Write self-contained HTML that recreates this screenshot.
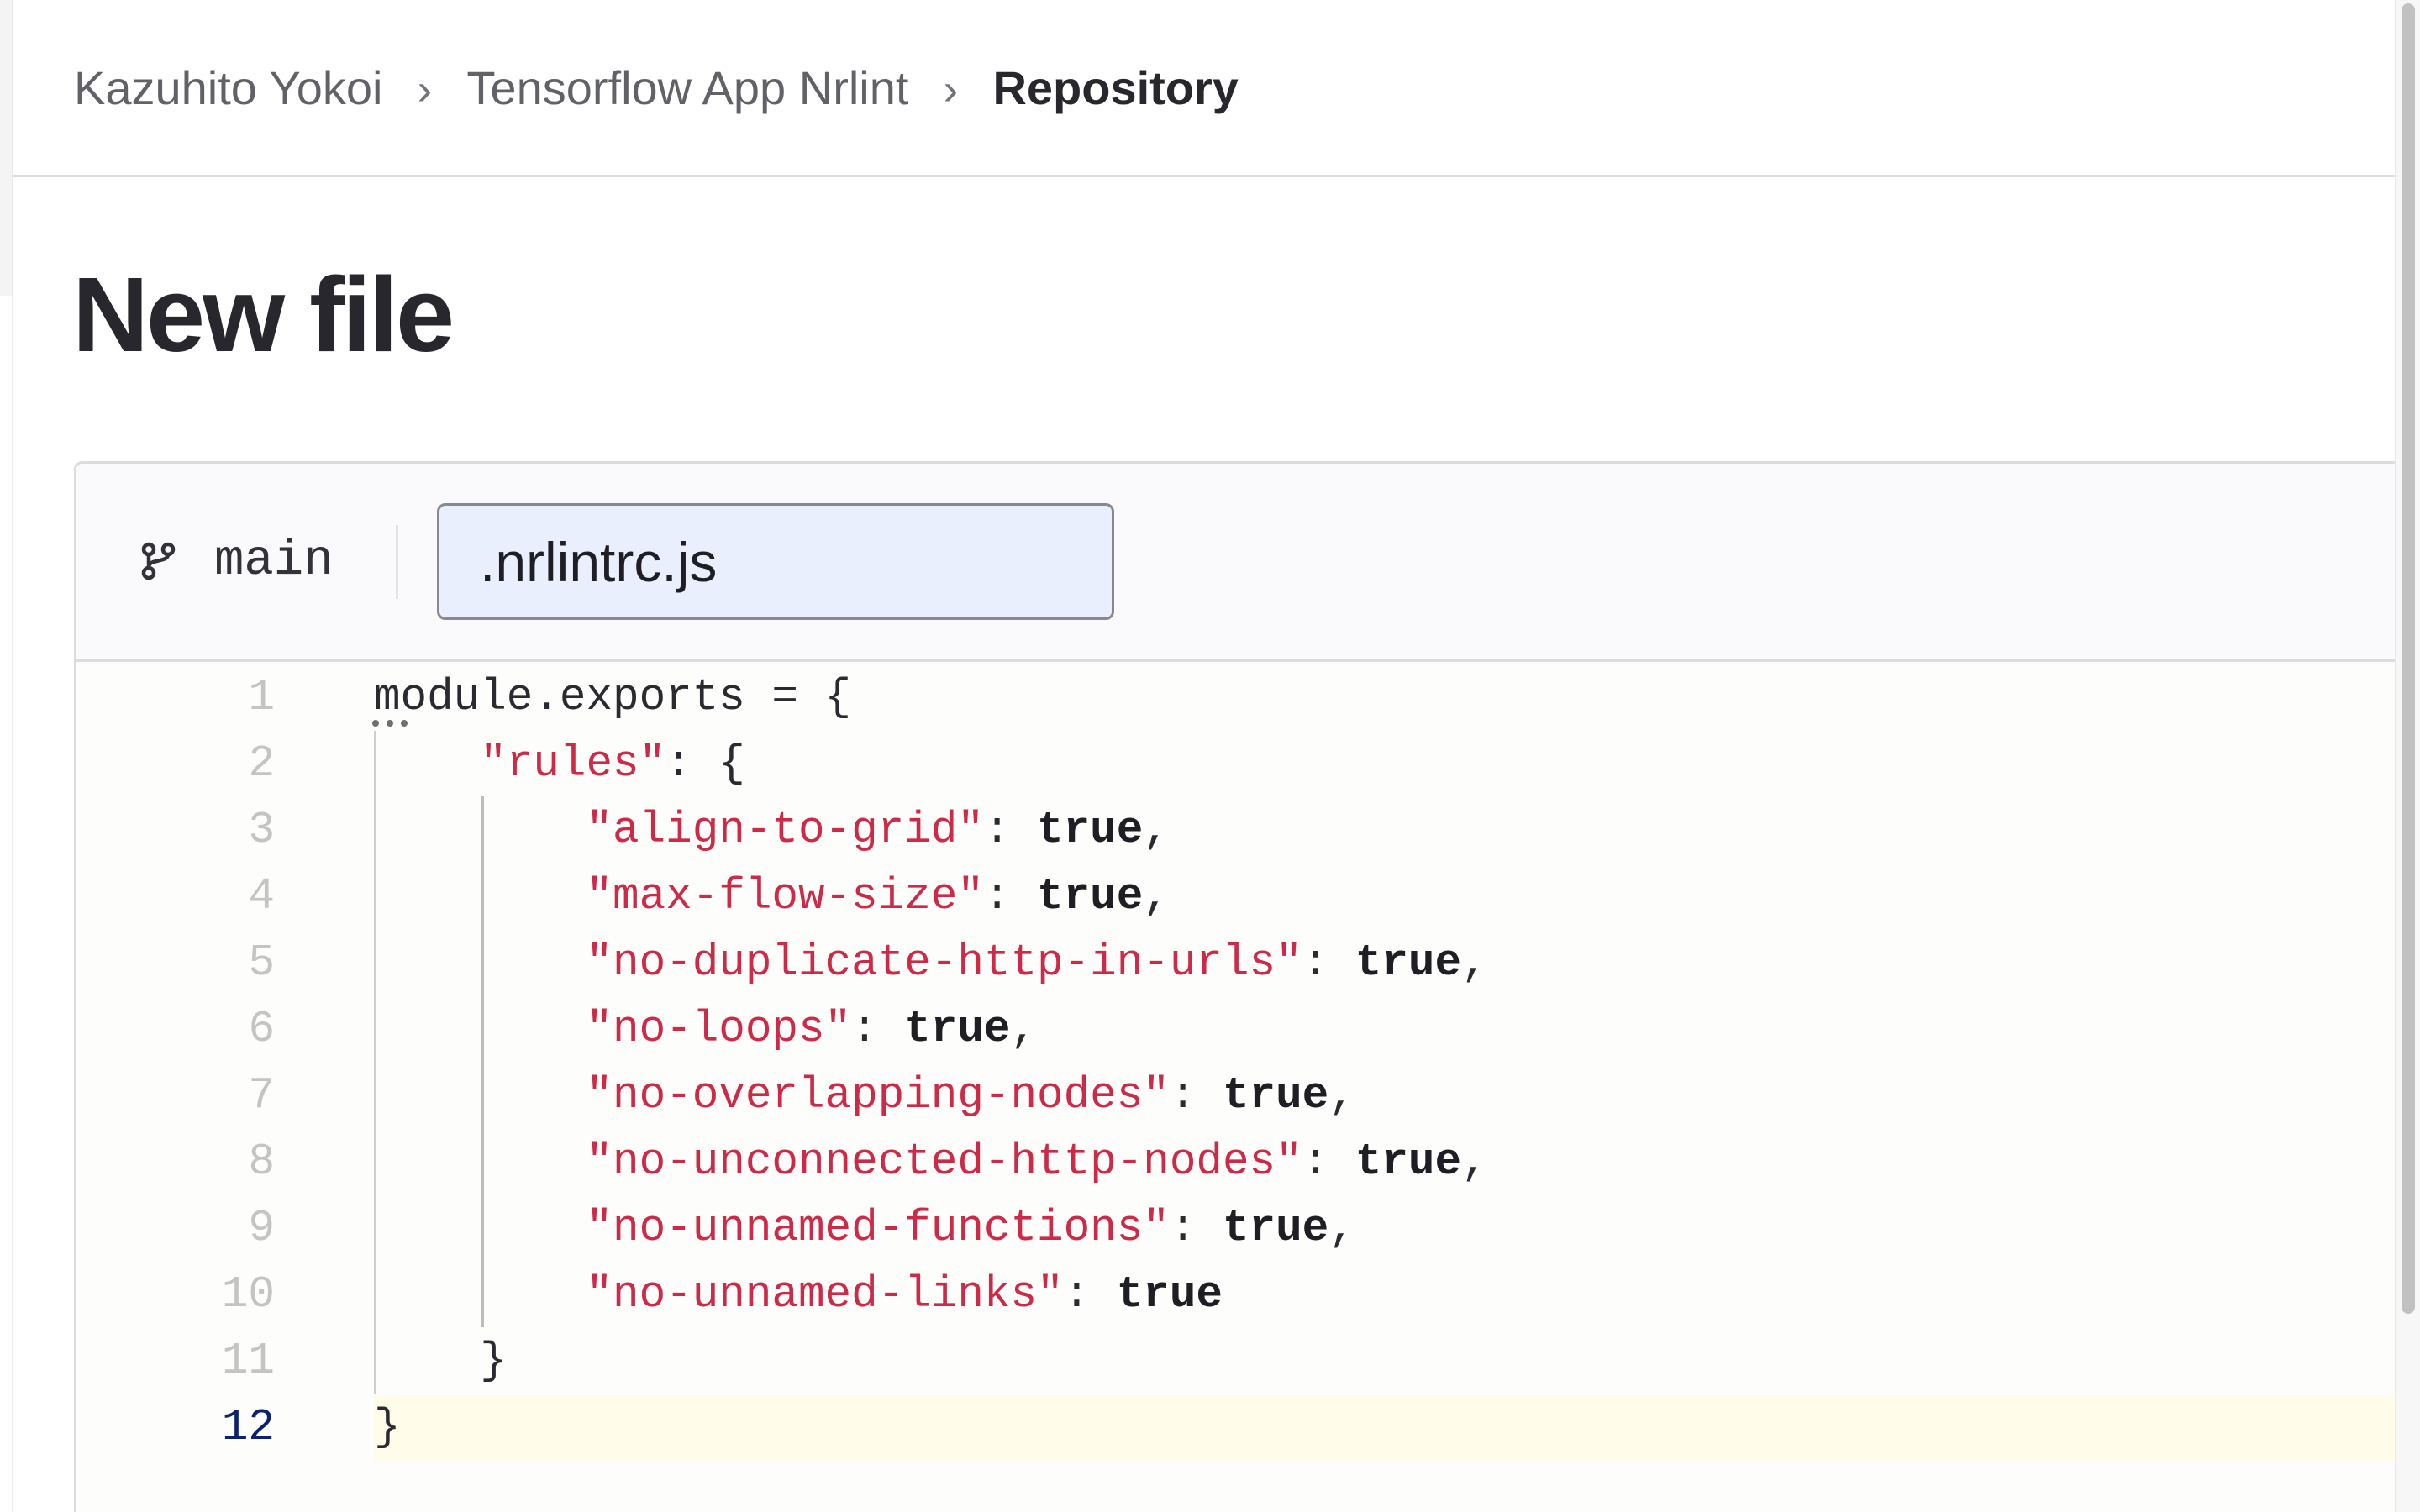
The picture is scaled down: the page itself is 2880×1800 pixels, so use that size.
<!DOCTYPE html>
<html><head><meta charset="utf-8"><style>
html,body{margin:0;padding:0;width:2880px;height:1800px;overflow:hidden;}
body{background:#fff;position:relative;font-family:"Liberation Sans",sans-serif;color:#333238;}
.lstrip{position:absolute;left:0;top:0;width:14px;height:352px;background:#f4f4f5;border-right:2px solid #e6e6e8;}
.lstrip2{position:absolute;left:14px;top:352px;width:2px;height:1448px;background:#ececef;}
.crumb{position:absolute;left:88px;top:70px;font-size:56px;line-height:70px;color:#626168;white-space:nowrap;}
.crumb .sep{display:inline-block;width:100px;text-align:center;color:#737278;font-size:52px;}
.crumb b{color:#28272d;}
.hline{position:absolute;left:16px;top:208px;width:2834px;height:3px;background:#dcdcde;}
h1{position:absolute;left:86px;top:300px;margin:0;font-size:126px;line-height:150px;font-weight:bold;color:#28272d;letter-spacing:-3px;}
.card{position:absolute;left:88px;top:549px;width:2770px;height:1300px;border:3px solid #dcdcde;border-radius:10px;background:#fdfdfb;overflow:hidden;}
.tool{position:absolute;left:0;top:0;width:100%;height:233px;background:#fafafc;border-bottom:3px solid #dcdcde;}
.branch{position:absolute;left:165px;top:625px;width:48px;height:70px;}
.main{position:absolute;left:255px;top:628px;font-family:"Liberation Mono",monospace;font-size:59px;line-height:80px;color:#333238;}
.vsep{position:absolute;left:471px;top:625px;width:3px;height:88px;background:#e3e3e6;}
.inp{position:absolute;left:520px;top:599px;width:806px;height:139px;box-sizing:border-box;border:3px solid #89888d;border-radius:10px;background:#e9effc;}
.inp span{position:absolute;left:48px;top:32px;font-size:66px;line-height:70px;color:#1f1e24;}
.active{position:absolute;left:445px;top:1661px;width:2405px;height:78px;background:#fffdea;}
.code{position:absolute;left:0;top:791px;font-family:"Liberation Mono",monospace;font-size:52.6px;line-height:79px;white-space:pre;}
.ln{position:absolute;left:0;width:327px;text-align:right;color:#c4c4c4;}
.tx{position:absolute;left:445px;color:#2b2a30;}
.s{color:#cc2a47;}
.k{font-weight:bold;color:#1f1e24;}
.g1{position:absolute;left:445px;top:870px;width:3px;height:790px;background:#cfcfcf;}
.g2{position:absolute;left:573px;top:948px;width:3px;height:632px;background:#bdbdbd;}
.dots{position:absolute;left:443px;top:852px;}
.dots i{display:inline-block;width:8px;height:8px;border-radius:50%;background:#6f6f6f;margin-right:9px;}
.sb{position:absolute;left:2850px;top:0;width:30px;height:1800px;background:#f7f7f7;border-left:2px solid #e8e8e8;}
.thumb{position:absolute;left:2858px;top:4px;width:16px;height:1560px;background:#c1c1c1;border-radius:8px;}
</style></head><body>
<div class="lstrip"></div><div class="lstrip2"></div>
<div class="crumb">Kazuhito Yokoi<span class="sep">›</span>Tensorflow App Nrlint<span class="sep">›</span><b>Repository</b></div>
<div class="hline"></div>
<h1>New file</h1>
<div class="card"><div class="tool"></div></div>
<svg class="branch" viewBox="0 0 48 70" fill="none" stroke="#333238" stroke-width="4.5">
<circle cx="12" cy="29" r="6"/><circle cx="35" cy="29" r="6"/><circle cx="12" cy="57" r="6"/>
<path d="M12 35 V51 M35 35 C35 45 12 40 12 50"/></svg>
<div class="main">main</div>
<div class="vsep"></div>
<div class="inp"><span>.nrlintrc.js</span></div>
<div class="active"></div>
<div class="g1"></div><div class="g2"></div>
<div class="dots"><i></i><i></i><i></i></div>
<div class="code">
<div class="ln" style="top:0">1</div><div class="tx" style="top:0">module.exports = {</div>
<div class="ln" style="top:79px">2</div><div class="tx" style="top:79px">    <span class="s">"rules"</span>: {</div>
<div class="ln" style="top:158px">3</div><div class="tx" style="top:158px">        <span class="s">"align-to-grid"</span>: <span class="k">true</span>,</div>
<div class="ln" style="top:237px">4</div><div class="tx" style="top:237px">        <span class="s">"max-flow-size"</span>: <span class="k">true</span>,</div>
<div class="ln" style="top:316px">5</div><div class="tx" style="top:316px">        <span class="s">"no-duplicate-http-in-urls"</span>: <span class="k">true</span>,</div>
<div class="ln" style="top:395px">6</div><div class="tx" style="top:395px">        <span class="s">"no-loops"</span>: <span class="k">true</span>,</div>
<div class="ln" style="top:474px">7</div><div class="tx" style="top:474px">        <span class="s">"no-overlapping-nodes"</span>: <span class="k">true</span>,</div>
<div class="ln" style="top:553px">8</div><div class="tx" style="top:553px">        <span class="s">"no-unconnected-http-nodes"</span>: <span class="k">true</span>,</div>
<div class="ln" style="top:632px">9</div><div class="tx" style="top:632px">        <span class="s">"no-unnamed-functions"</span>: <span class="k">true</span>,</div>
<div class="ln" style="top:711px">10</div><div class="tx" style="top:711px">        <span class="s">"no-unnamed-links"</span>: <span class="k">true</span></div>
<div class="ln" style="top:790px">11</div><div class="tx" style="top:790px">    }</div>
<div class="ln" style="top:869px;color:#0b216f">12</div><div class="tx" style="top:869px">}</div>
</div>
<div class="sb"></div><div class="thumb"></div>
</body></html>
